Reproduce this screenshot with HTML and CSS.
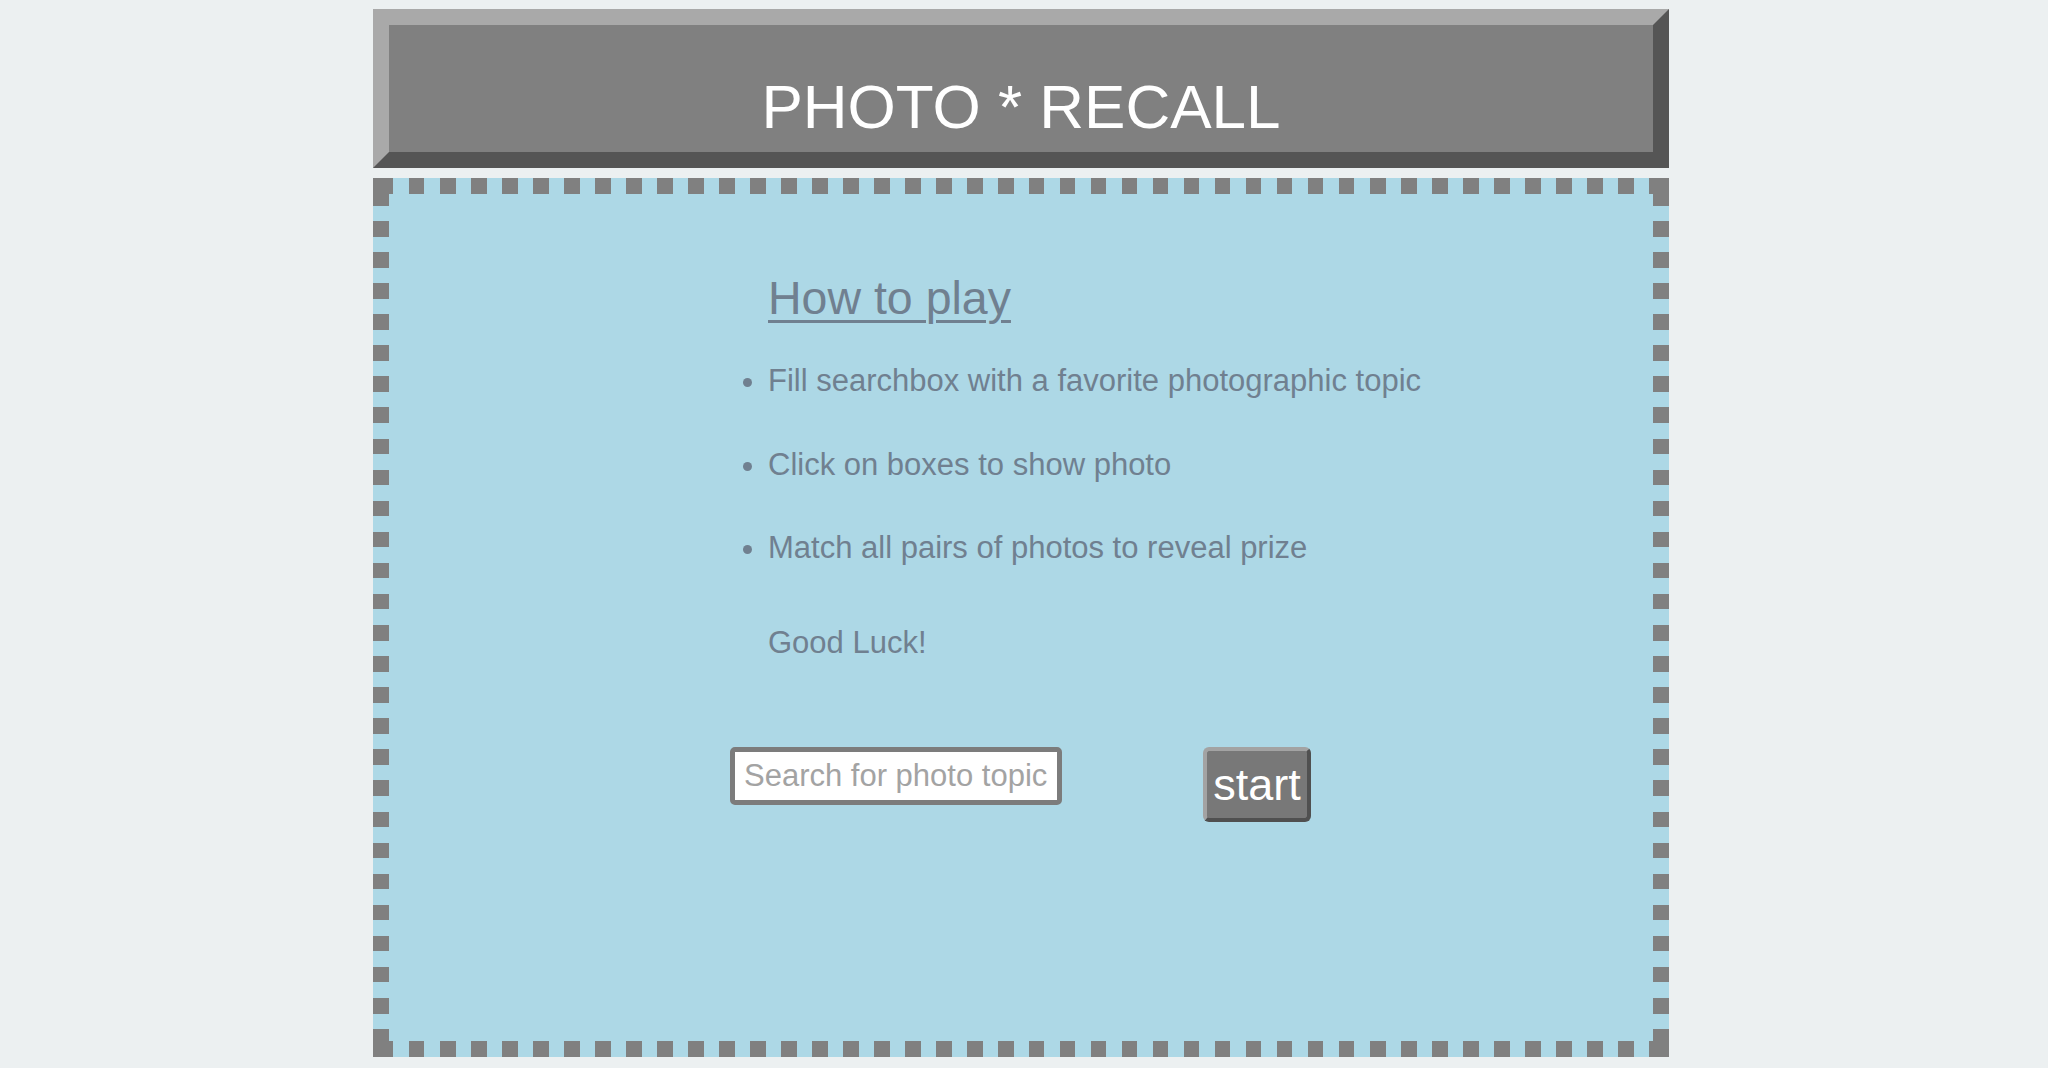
FILE: index.html
```html
<!DOCTYPE html>
<html lang="en">
<head>
<meta charset="utf-8">
<title>Photo Recall</title>
<link rel="stylesheet" href="styles.css">
</head>
<body>
<div class="page">
  <header class="banner">
    <h1 class="title">PHOTO * RECALL</h1>
  </header>
  <main class="board">
    <div class="intro">
      <h2 class="howto">How to play</h2>
      <ul class="rules">
        <li>Fill searchbox with a favorite photographic topic</li>
        <li>Click on boxes to show photo</li>
        <li>Match all pairs of photos to reveal prize</li>
      </ul>
      <p class="luck">Good Luck!</p>
      <div class="controls">
        <input class="search" type="text" placeholder="Search for photo topic">
        <button class="start" type="button">start</button>
      </div>
    </div>
  </main>
</div>
</body>
</html>
```

FILE: styles.css
```css
html, body {
  margin: 0;
  padding: 0;
  background: #ecf0f1;
  font-family: "Liberation Sans", Arial, sans-serif;
}

.page {
  width: 1296px;
  margin: 9px 0 0 373px;
  display: flex;
  flex-direction: column;
  gap: 10px;
}

.banner {
  box-sizing: border-box;
  height: 159px;
  background: #808080;
  border: 16px solid;
  border-color: #a9a9a9 #555555 #555555 #a9a9a9;
  padding-top: 47px;
}

.title {
  margin: 0;
  text-align: center;
  color: #ffffff;
  font-weight: normal;
  font-size: 62px;
  line-height: 69px;
}

.board {
  box-sizing: border-box;
  height: 879px;
  border: 16px solid transparent;
  padding: 78px 0 0 341px;
  background-origin: border-box;
  background-clip: border-box;
  background-color: #add8e6;
  background-repeat: no-repeat;
  background-image:
    linear-gradient(#808080, #808080),
    linear-gradient(#808080, #808080),
    linear-gradient(#808080, #808080),
    linear-gradient(#808080, #808080),
    linear-gradient(#808080, #808080),
    linear-gradient(#808080, #808080),
    linear-gradient(#808080, #808080),
    linear-gradient(#808080, #808080),
    repeating-linear-gradient(90deg, transparent 0 5px, #808080 5px 20.5px, transparent 20.5px 31px),
    repeating-linear-gradient(90deg, transparent 0 5px, #808080 5px 20.5px, transparent 20.5px 31px),
    repeating-linear-gradient(180deg, #808080 0 15.5px, transparent 15.5px 31.08px),
    repeating-linear-gradient(180deg, #808080 0 15.5px, transparent 15.5px 31.08px);
  background-size:
    20px 16px, 16px 28px,
    20px 16px, 16px 28px,
    20px 16px, 16px 28px,
    20px 16px, 16px 28px,
    100% 16px, 100% 16px,
    16px 793px, 16px 793px;
  background-position:
    0 0, 0 0,
    100% 0, 100% 0,
    0 100%, 0 100%,
    100% 100%, 100% 100%,
    0 0, 0 100%,
    0 43px, 100% 43px;
}

.intro {
  color: #708090;
}

.howto {
  margin: 0 0 0 38px;
  font-weight: normal;
  font-size: 46.5px;
  line-height: 53px;
  text-decoration: underline;
  text-decoration-thickness: 3px;
  text-underline-offset: 6px;
}

.rules {
  margin: 38px 0 0 0;
  padding-left: 38px;
  font-size: 31px;
  line-height: 36px;
}

.rules li + li {
  margin-top: 47.5px;
}

.luck {
  margin: 59px 0 0 38px;
  font-size: 31px;
  line-height: 36px;
}

.controls {
  margin-top: 86px;
  display: flex;
  align-items: flex-start;
  gap: 141px;
}

.search {
  box-sizing: border-box;
  width: 332px;
  height: 58px;
  border: 5px solid #7c7c7c;
  border-radius: 5px;
  background: #ffffff;
  padding: 0 7px 0 9px;
  font-family: "Liberation Sans", Arial, sans-serif;
  font-size: 31px;
  color: #333;
  outline: none;
}

.search::placeholder {
  color: #a3a3a3;
}

.start {
  box-sizing: border-box;
  width: 108px;
  height: 75px;
  background: #787878;
  border: 4px solid;
  border-color: #a3a3a3 #505050 #505050 #a3a3a3;
  border-radius: 6px;
  color: #ffffff;
  font-family: "Liberation Sans", Arial, sans-serif;
  font-size: 45px;
  padding: 0;
  line-height: 62px;
}
```
